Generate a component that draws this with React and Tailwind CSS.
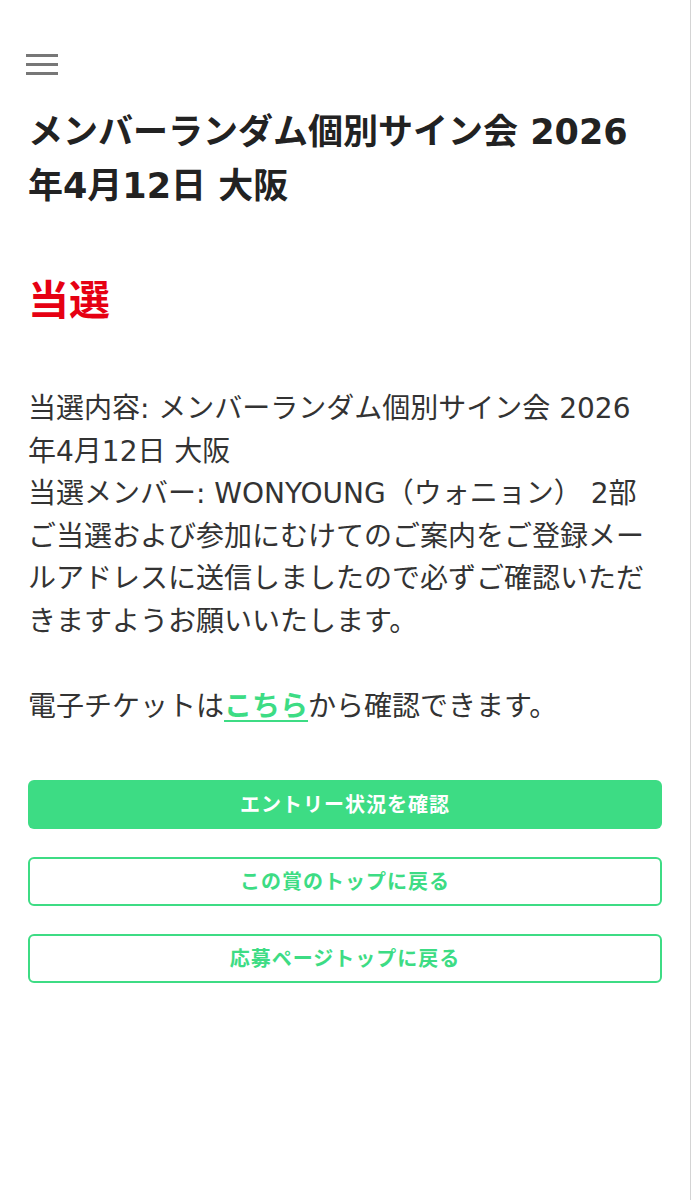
import React from 'react';

const font = { fontFamily: '"DejaVu Sans", "Noto Sans CJK JP", "Noto Sans", sans-serif' };

export default function App() {
    return (
        <div
            style={font}
            className="min-h-[1200px] w-full bg-white border-r border-[#d4d4d4] px-7 text-[#333]"
        >
            {/* menu icon */}
            <div className="pt-[54px] flex flex-col gap-[6px] w-[32px] ml-[-2px]">
                <span className="block h-[3px] bg-[#777]" />
                <span className="block h-[3px] bg-[#777]" />
                <span className="block h-[3px] bg-[#777]" />
            </div>

            <h1 className="mt-[30px] text-[35px] leading-[54px] font-bold text-[#222]">
                メンバーランダム個別サイン会 2026
                <br />
                年4月12日 大阪
            </h1>

            <h2 className="mt-[60px] text-[41px] leading-[56px] font-bold text-[#e60012]">当選</h2>

            <div className="mt-[59px] text-[28px] leading-[42.5px]">
                <p>
                    当選内容: メンバーランダム個別サイン会 2026
                    <br />
                    年4月12日 大阪
                </p>
                <p>当選メンバー: WONYOUNG（ウォニョン） 2部</p>
                <p>ご当選および参加にむけてのご案内をご登録メールアドレスに送信しましたので必ずご確認いただきますようお願いいたします。</p>
                <p className="mt-[42.5px]">
                    電子チケットは
                    <a href="#" className="font-bold text-[#3ddc84] underline decoration-2 underline-offset-4">こちら</a>
                    から確認できます。
                </p>
            </div>

            <div className="mt-[52px] flex flex-col gap-[28px]">
                <button className="h-[49px] rounded-[6px] bg-[#3ddc84] text-white text-[20px] font-bold tracking-[1px]">
                    エントリー状況を確認
                </button>
                <button className="h-[49px] rounded-[6px] border-2 border-[#3ddc84] bg-white text-[#3ddc84] text-[20px] font-bold tracking-[1px]">
                    この賞のトップに戻る
                </button>
                <button className="h-[49px] rounded-[6px] border-2 border-[#3ddc84] bg-white text-[#3ddc84] text-[20px] font-bold tracking-[1px]">
                    応募ページトップに戻る
                </button>
            </div>
        </div>
    );
}
